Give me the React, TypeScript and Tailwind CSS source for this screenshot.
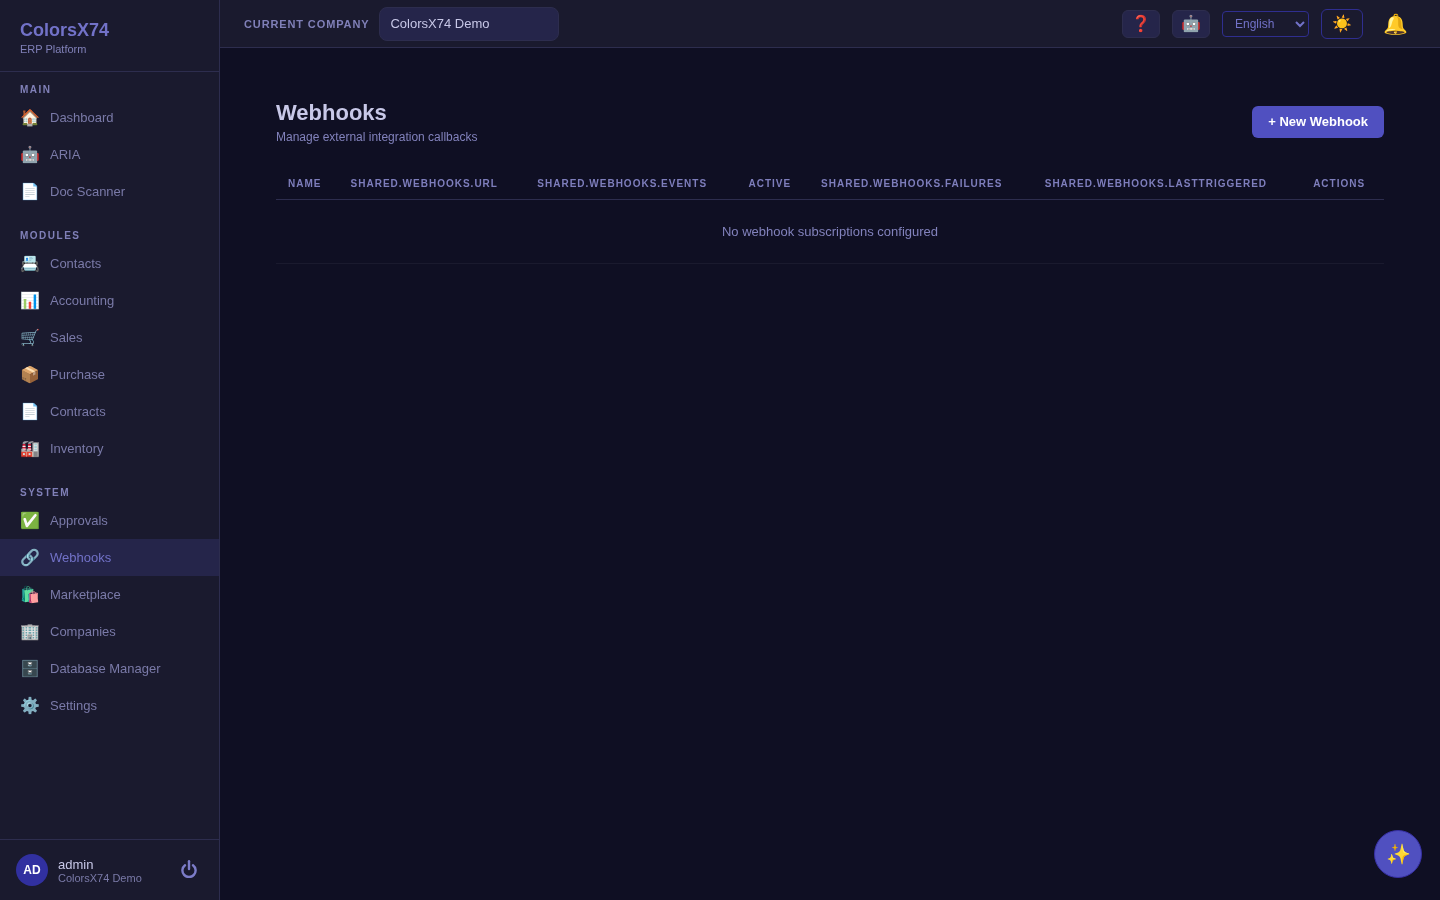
const sections = [
  {
    title: 'MAIN',
    items: [
      { icon: '🏠', label: 'Dashboard' },
      { icon: '🤖', label: 'ARIA' },
      { icon: '📄', label: 'Doc Scanner' },
    ],
  },
  {
    title: 'MODULES',
    items: [
      { icon: '📇', label: 'Contacts' },
      { icon: '📊', label: 'Accounting' },
      { icon: '🛒', label: 'Sales' },
      { icon: '📦', label: 'Purchase' },
      { icon: '📄', label: 'Contracts' },
      { icon: '🏭', label: 'Inventory' },
    ],
  },
  {
    title: 'SYSTEM',
    items: [
      { icon: '✅', label: 'Approvals' },
      { icon: '🔗', label: 'Webhooks', active: true },
      { icon: '🛍️', label: 'Marketplace' },
      { icon: '🏢', label: 'Companies' },
      { icon: '🗄️', label: 'Database Manager' },
      { icon: '⚙️', label: 'Settings' },
    ],
  },
]

const columns = [
  'Name',
  'shared.webhooks.url',
  'shared.webhooks.events',
  'Active',
  'shared.webhooks.failures',
  'shared.webhooks.lastTriggered',
  'Actions',
]

function Sidebar() {
  return (
    <aside className="w-[220px] shrink-0 h-full flex flex-col bg-[#1a1a2e] border-r border-[#2d2d4e]">
      <div className="h-[72px] shrink-0 px-5 pt-[19px] border-b border-[#2d2d4e]">
        <div className="text-[18px] leading-[22px] font-bold text-[#7272c8]">ColorsX74</div>
        <div className="text-[11px] leading-[13px] mt-[2px] text-[#8080b8]">ERP Platform</div>
      </div>
      <nav className="flex-1 pt-3 flex flex-col gap-[20px]">
        {sections.map(section => (
          <div key={section.title}>
            <div className="h-[11px] leading-[11px] mb-1 px-5 text-[10px] font-bold tracking-[0.15em] text-[#8080b8]">
              {section.title}
            </div>
            {section.items.map(item => (
              <a
                key={item.label}
                className={`h-[37px] px-5 flex items-center gap-3 text-[13px] ${item.active ? 'bg-[#25254a] text-[#7272c8]' : 'text-[#7a7aa8]'}`}
              >
                <span className="w-[18px] text-[16px] leading-none whitespace-nowrap">{item.icon}</span>
                {item.label}
              </a>
            ))}
          </div>
        ))}
      </nav>
      <div className="h-[61px] shrink-0 border-t border-[#2d2d4e] pl-4 pr-[22px] flex items-center gap-[10px]">
        <div className="w-8 h-8 rounded-full bg-[#3130a0] flex items-center justify-center text-white text-xs font-bold">
          AD
        </div>
        <div className="flex-1 pt-[2px]">
          <div className="text-[13px] leading-[14px] text-[#c8c8e8]">admin</div>
          <div className="text-[11px] leading-[13px] text-[#7a7aa8]">ColorsX74 Demo</div>
        </div>
        <svg className="mb-[2px]" width="16" height="18" viewBox="0 0 16 18" fill="none" stroke="#7c7cc8" strokeWidth="2.4" strokeLinecap="round">
          <path d="M8 1.2V9" />
          <path d="M4 5.2a6.6 6.6 0 1 0 8 0" />
        </svg>
      </div>
    </aside>
  )
}

function Topbar() {
  return (
    <header className="h-[48px] shrink-0 bg-[#1a1a2e] border-b border-[#2d2d4e] pl-6 pr-[29px] flex items-center">
      <span className="text-[11px] pt-[1px] font-bold tracking-[0.08em] text-[#8080b8] mr-[10px]">CURRENT COMPANY</span>
      <div className="w-[180px] h-[34px] px-[10px] flex items-center rounded-lg bg-[#25254a] border border-[#2d2d4e] text-[13px] text-[#c8c8e8]">
        ColorsX74 Demo
      </div>
      <div className="ml-auto flex items-center">
        <button className="w-[38px] h-[28px] rounded-md bg-[#25254a] border border-[#2d2d4e] text-[16px] leading-none flex items-center justify-center">❓</button>
        <button className="w-[38px] h-[28px] ml-3 rounded-md bg-[#25254a] border border-[#2d2d4e] text-[16px] leading-none flex items-center justify-center">🤖</button>
        <select className="w-[87px] h-[26px] ml-3 pl-2 rounded border border-[#2f2e8f] bg-[#1a1a2e] text-xs text-[#7272c8]">
          <option>English</option>
        </select>
        <button className="w-[42px] h-[30px] ml-3 rounded-md border border-[#2f2e8f] text-[16px] leading-none flex items-center justify-center">☀️</button>
        <span className="w-[32px] ml-4 text-[20px] leading-none flex justify-center">🔔</span>
      </div>
    </header>
  )
}

export default function App() {
  return (
    <div className="w-screen h-screen flex overflow-hidden bg-[#0f0f23] will-change-transform font-['Liberation_Sans',Arial,sans-serif]">
      <Sidebar />
      <div className="flex-1 flex flex-col min-w-0">
        <Topbar />
        <main className="flex-1 px-14 pt-[52px]">
          <div className="flex items-center justify-between mb-[23px]">
            <div>
              <h1 className="text-[22px] leading-[26px] font-bold text-[#c8c8e8]">Webhooks</h1>
              <p className="text-xs leading-[14px] mt-[4px] text-[#8282bc]">Manage external integration callbacks</p>
            </div>
            <button className="h-8 px-4 rounded-md bg-[#5050c0] text-[13px] font-bold text-white">+ New Webhook</button>
          </div>
          <table className="w-full border-collapse">
            <thead>
              <tr className="border-b border-[#2d2d4e]">
                {columns.map(col => (
                  <th key={col} className="h-[32px] px-3 pt-[2px] text-left text-[10px] font-bold uppercase tracking-[0.1em] text-[#7e7ebc] whitespace-nowrap">
                    {col}
                  </th>
                ))}
              </tr>
            </thead>
            <tbody>
              <tr className="border-b border-[#1a1a2e]">
                <td colSpan={7} className="h-[64px] pt-[2px] text-center text-[13px] text-[#8282bc]">
                  No webhook subscriptions configured
                </td>
              </tr>
            </tbody>
          </table>
        </main>
      </div>
      <button className="fixed right-[18px] bottom-[22px] w-12 h-12 rounded-full bg-[#5050c0] border border-[#3730a3] text-[20px] leading-none flex items-center justify-center">✨</button>
    </div>
  )
}
